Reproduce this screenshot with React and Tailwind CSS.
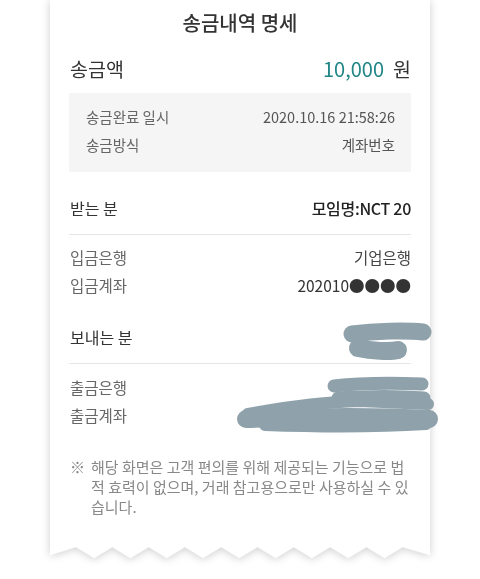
import React from "react";

function Zigzag() {
  const pts = ["0,0", "0,9"];
  for (let k = 0; k <= 9; k++) {
    pts.push(`${(26 + 36.3 * k).toFixed(1)},1`);
    if (k < 9) pts.push(`${(44.15 + 36.3 * k).toFixed(1)},12`);
  }
  pts.push("380,9", "380,0");
  return (
    <svg width="380" height="13" viewBox="0 0 380 13" className="block">
      <polygon points={pts.join(" ")} fill="#ffffff" stroke="#ffffff" strokeWidth="0.5" strokeLinejoin="round" />
    </svg>
  );
}

function Scribbles() {
  const c = "#8fa2ab";
  return (
    <svg
      className="absolute left-0 top-0 pointer-events-none"
      width="480"
      height="579"
      viewBox="0 0 480 579"
    >
      <g stroke={c} strokeLinecap="round" strokeLinejoin="round" fill="none">
        <path d="M352 334 C 375 331, 405 330, 423 332" strokeWidth="17" />
        <path d="M358 348 C 372 351, 390 352, 398 350" strokeWidth="18" />
        <path d="M334 386 C 360 383, 395 383, 422 384" strokeWidth="13" />
        <path d="M338 398 C 370 396, 400 396, 424 398" strokeWidth="13" />
        <path d="M248 414 C 280 408, 320 402, 360 401 L 428 404" strokeWidth="12" />
        <path d="M246 419 C 300 417, 380 416, 429 419" strokeWidth="18" />
        <path d="M265 425 C 320 427, 380 427, 426 424" strokeWidth="12" />
      </g>
    </svg>
  );
}

export default function App() {
  return (
    <div className="relative w-[480px] h-[579px] bg-white overflow-hidden font-['Noto_Sans_CJK_KR','Noto_Sans',sans-serif]">
      <div className="w-[380px] mx-auto drop-shadow-[0_1px_4px_rgba(0,0,0,0.2)]">
        <div className="bg-white px-[19px] pb-[29px]">
          <div className="h-[46px] flex items-center justify-center text-[20px] font-medium text-[#333]">
            송금내역 명세
          </div>
          <div className="h-[45px] flex items-center justify-between">
            <span className="text-[19.5px] text-[#333] ml-px">송금액</span>
            <span className="flex items-center">
              <span className="text-[20px] text-[#1f8585]">10,000</span>
              <span className="text-[19.5px] text-[#333] ml-[9px]">원</span>
            </span>
          </div>
          <div className="mt-[2px] bg-[#f5f5f5] pt-[10px] pb-[13px] pl-[17px] pr-[16px] text-[14.5px] text-[#666]">
            <div className="h-[28px] flex items-center justify-between">
              <span>송금완료 일시</span>
              <span className="text-[#555]">2020.10.16 21:58:26</span>
            </div>
            <div className="h-[28px] flex items-center justify-between">
              <span>송금방식</span>
              <span className="text-[#555]">계좌번호</span>
            </div>
          </div>

          <div className="mt-[16px] h-[40px] flex items-center justify-between text-[16px]">
            <span className="text-[#333] ml-px">받는 분</span>
            <span className="text-[#222] font-medium tracking-[-0.3px]">모임명:NCT 20</span>
          </div>
          <div className="mt-[6px] h-px bg-[#e6e6e6]" />

          <div className="mt-[9px] text-[15.5px]">
            <div className="h-[28px] flex items-center justify-between">
              <span className="text-[#666] ml-px">입금은행</span>
              <span className="text-[#444]">기업은행</span>
            </div>
            <div className="h-[28px] flex items-center justify-between">
              <span className="text-[#666] ml-px">입금계좌</span>
              <span className="text-[#333]">202010●●●●</span>
            </div>
          </div>

          <div className="mt-[17px] h-[40px] flex items-center justify-between text-[16px]">
            <span className="text-[#333] ml-px">보내는 분</span>
            <span />
          </div>
          <div className="mt-[6px] h-px bg-[#e6e6e6]" />

          <div className="mt-[10px] text-[15.5px]">
            <div className="h-[28px] flex items-center justify-between">
              <span className="text-[#666] ml-px">출금은행</span>
              <span />
            </div>
            <div className="h-[28px] flex items-center justify-between">
              <span className="text-[#666] ml-px">출금계좌</span>
              <span />
            </div>
          </div>

          <div className="mt-[27px] flex text-[15px] leading-[20px] text-[#888]">
            <span className="w-[21px] shrink-0 ml-px">※</span>
            <span className="whitespace-nowrap">
              해당 화면은 고객 편의를 위해 제공되는 기능으로 법
              <br />
              적 효력이 없으며, 거래 참고용으로만 사용하실 수 있
              <br />
              습니다.
            </span>
          </div>
        </div>
        <Zigzag />
      </div>
      <Scribbles />
    </div>
  );
}
